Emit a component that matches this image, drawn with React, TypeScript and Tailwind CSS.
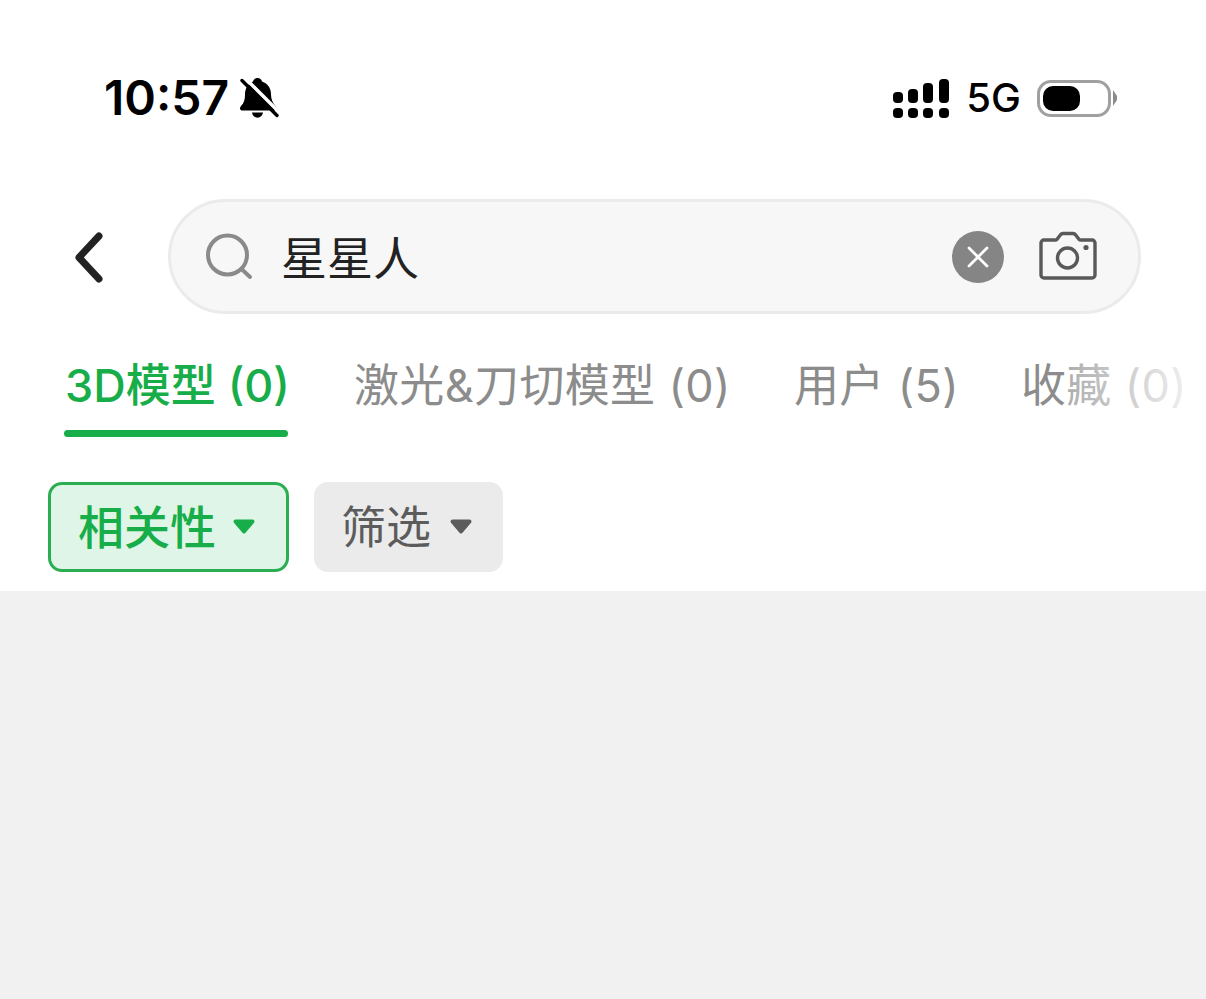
import React from 'react';

const Caret = ({ color }: { color: string }) => (
  <svg width="24" height="18" viewBox="0 0 24 18" className="shrink-0">
    <path d="M3.500 3.500h17l-8.500 10z" fill={color} stroke={color} strokeWidth="4" strokeLinejoin="round" />
  </svg>
);

const SignalIcon = () => (
  <svg width="58" height="39" viewBox="0 0 58 39" className="shrink-0">
    <g fill="#000">
      <rect x="1" y="13" width="10" height="11" rx="4" />
      <rect x="16" y="10" width="10" height="14" rx="4" />
      <rect x="31" y="4" width="10" height="20" rx="4" />
      <rect x="47" y="0" width="10" height="24" rx="4" />
      <rect x="1" y="29" width="10" height="10" rx="4" />
      <rect x="16" y="29" width="10" height="10" rx="4" />
      <rect x="31" y="29" width="10" height="10" rx="4" />
      <rect x="47" y="29" width="10" height="10" rx="4" />
    </g>
  </svg>
);

const BellSlash = () => (
  <svg width="40" height="40" viewBox="0 0 40 40" className="shrink-0">
    <path d="M18.500 0c2.400 0 4 1.500 4.500 3.500C29 5.500 32 10.500 32 16.500c0 5 2 8.500 4.500 11.500 2 2.500 1 4.500-2 4.500H4c-3 0-4-2-2-4.500C5 25 6 21.500 6 16.500 6 10.500 9 5.500 14 3.500 14.500 1.500 16.100 0 18.500 0z" fill="#000" />
    <path d="M13 34.500h11c-.5 3-2.800 5.200-5.500 5.200S13.500 37.500 13 34.500z" fill="#000" />
    <path d="M6 0l36 36" stroke="#fff" strokeWidth="3.500" />
    <path d="M3 2.500l35 35" stroke="#000" strokeWidth="3.400" strokeLinecap="round" />
  </svg>
);

const Battery = () => (
  <div className="flex items-center shrink-0">
    <div className="w-[74px] h-[37px] rounded-[14px] border-[3px] border-[#a0a0a0] p-[3px] bg-white">
      <div className="w-[37px] h-full rounded-[10px] bg-black" />
    </div>
    <svg width="5" height="16" viewBox="0 0 5 16" className="ml-[2px]">
      <path d="M0 0l4 6v4l-4 6z" fill="#8c8c8c" />
    </svg>
  </div>
);

const tabs = [
  { label: '3D模型 (0)', active: true, width: 'w-[225px]' },
  { label: '激光&刀切模型 (0)', active: false, width: 'w-[376px]' },
  { label: '用户 (5)', active: false, width: 'w-[163px]' },
  { label: '收藏 (0)', active: false, width: 'w-[160px]' },
];

export default function App() {
  return (
    <div className="w-[1206px] h-[999px] overflow-hidden flex flex-col bg-[#f1f1f1] font-['Inter','Noto_Sans_CJK_SC',sans-serif]">
      <div className="bg-white h-[591px] flex flex-col">
        {/* status bar */}
        <div className="h-[196px] flex items-center justify-between pl-[104px] pr-[88px]">
          <div className="flex items-center gap-[10px]">
            <span className="text-[48px] leading-none font-semibold text-black">10:57</span>
            <BellSlash />
          </div>
          <div className="flex items-center">
            <SignalIcon />
            <span className="ml-[16px] mr-[16px] text-[40px] leading-none font-medium text-black">5G</span>
            <Battery />
          </div>
        </div>

        {/* search */}
        <div className="flex items-center mt-[3px] pl-[74px]">
          <svg width="32" height="56" viewBox="0 0 32 56" className="shrink-0">
            <path d="M25 7L5 28.500 25 50" fill="none" stroke="#222222" strokeWidth="7" strokeLinecap="round" strokeLinejoin="round" />
          </svg>
          <div className="ml-[62px] w-[973px] h-[115px] rounded-full bg-[#f7f7f7] border-[3px] border-[#ebebeb] flex items-center pl-[34px] pr-[41px]">
            <svg width="50" height="50" viewBox="0 0 50 50" className="shrink-0">
              <circle cx="22.500" cy="23" r="19.500" fill="none" stroke="#8a8a8a" strokeWidth="4" />
              <path d="M36.500 37l8.500 8" stroke="#8a8a8a" strokeWidth="4" strokeLinecap="round" />
            </svg>
            <span className="ml-[26px] pt-[3px] text-[46px] leading-none text-[#222222]">星星人</span>
            <div className="ml-auto w-[52px] h-[52px] rounded-full bg-[#858585] flex items-center justify-center">
              <svg width="24" height="24" viewBox="0 0 24 24">
                <path d="M3 3l18 18M21 3L3 21" stroke="#fff" strokeWidth="2.800" strokeLinecap="round" />
              </svg>
            </div>
            <svg width="58" height="50" viewBox="0 0 58 50" className="ml-[35px] mb-[2px] shrink-0">
              <path d="M5 9h11c1 0 1.700-.4 2.300-1l3-4c.7-1 1.600-1.500 2.700-1.500h10c1.100 0 2 .5 2.700 1.500l3 4c.6.6 1.300 1 2.300 1h11c1.700 0 3 1.300 3 3v32c0 1.700-1.300 3-3 3H5c-1.700 0-3-1.300-3-3V12c0-1.700 1.300-3 3-3z" fill="none" stroke="#595959" strokeWidth="3.400" strokeLinejoin="round" />
              <circle cx="28.500" cy="27" r="10" fill="none" stroke="#595959" strokeWidth="3.400" />
              <circle cx="47" cy="16.500" r="2.600" fill="#595959" />
            </svg>
          </div>
        </div>

        {/* tabs */}
        <div className="relative mt-[42px] flex gap-[64px] pl-[65px] overflow-hidden">
          {tabs.map((tab) => (
            <div key={tab.label} className={`${tab.width} shrink-0 flex flex-col`}>
              <span className={`text-[45px] leading-[60px] whitespace-nowrap ${tab.active ? 'text-[#17ad49] font-medium' : 'text-[#8c8c8c] tracking-[0.35px]'}`}>
                {tab.label}
              </span>
              {tab.active && <div className="mt-[14px] h-[7px] w-[224px] rounded-full bg-[#17ad49] -ml-px" />}
            </div>
          ))}
          <div className="absolute right-0 top-0 w-[138px] h-[60px] bg-gradient-to-r from-white/30 to-white/95" />
        </div>

        {/* filters */}
        <div className="mt-[45px] ml-[48px] flex gap-[25px]">
          <div className="w-[241px] h-[90px] rounded-[14px] border-[3px] border-[#2bae52] bg-[#dff5e7] flex items-center pl-[27px] gap-[16px]">
            <span className="text-[46px] leading-none font-medium text-[#17ad49]">相关性</span>
            <Caret color="#17ad49" />
          </div>
          <div className="w-[189px] h-[90px] rounded-[14px] bg-[#ebebeb] flex items-center pl-[27px] gap-[18px]">
            <span className="text-[45px] leading-none text-[#5c5c5c]">筛选</span>
            <Caret color="#5c5c5c" />
          </div>
        </div>
      </div>
    </div>
  );
}
